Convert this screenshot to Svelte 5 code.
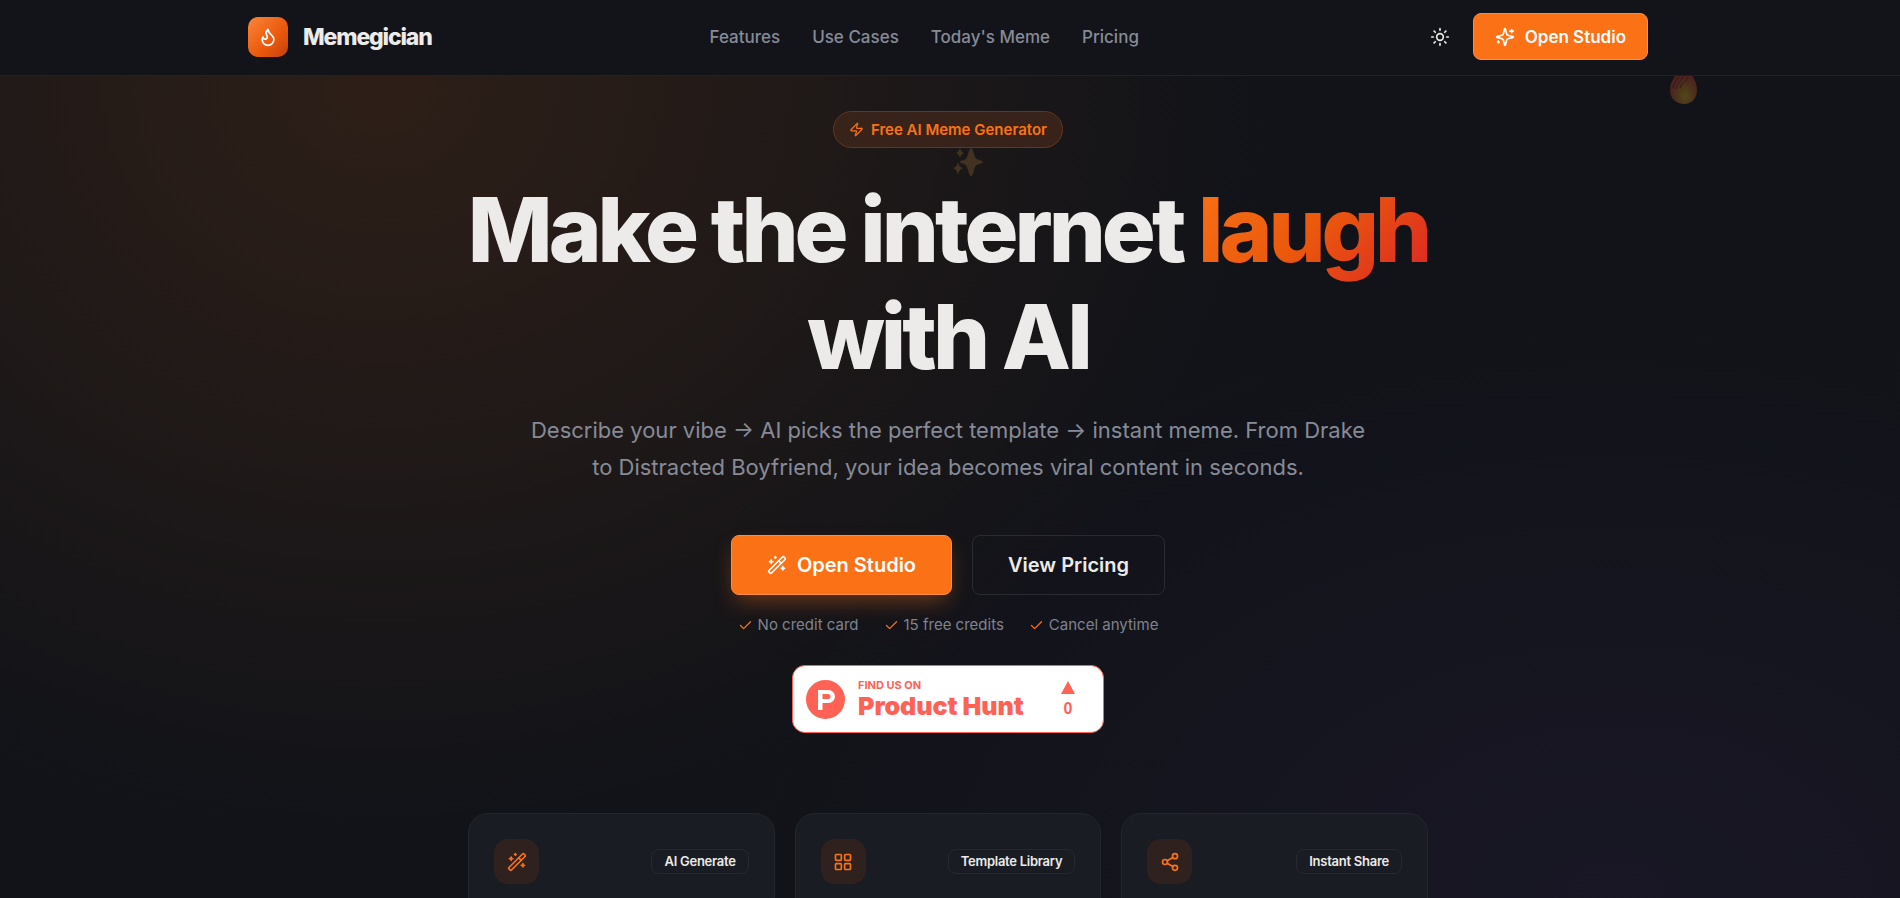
<script>
    const links = ['Features', 'Use Cases', "Today's Meme", 'Pricing']
    const perks = ['No credit card', '15 free credits', 'Cancel anytime']
    const cards = [
        { icon: 'wand', tag: 'AI Generate' },
        { icon: 'grid', tag: 'Template Library' },
        { icon: 'share', tag: 'Instant Share' }
    ]
</script>

{#snippet icon(name, size)}
<svg class="icon" width={size} height={size} viewBox="0 0 24 24" aria-hidden="true">
    {#if name === 'flame'}
        <path d="M8.5 14.5A2.5 2.5 0 0 0 11 12c0-1.38-.5-2-1-3-1.072-2.143-.224-4.054 2-6 .5 2.5 2 4.9 4 6.5 2 1.6 3 3.5 3 5.5a7 7 0 1 1-14 0c0-1.153.433-2.294 1-3a2.5 2.5 0 0 0 2.5 2.5z" />
    {:else if name === 'sun'}
        <circle cx="12" cy="12" r="4" />
        <path d="M12 2v2M12 20v2M4.93 4.93l1.41 1.41M17.66 17.66l1.41 1.41M2 12h2M20 12h2M6.34 17.66l-1.41 1.41M19.07 4.93l-1.41 1.41" />
    {:else if name === 'sparkles'}
        <path d="M9.937 15.5A2 2 0 0 0 8.5 14.063l-6.135-1.582a.5.5 0 0 1 0-.962L8.5 9.936A2 2 0 0 0 9.937 8.5l1.582-6.135a.5.5 0 0 1 .963 0L14.063 8.5A2 2 0 0 0 15.5 9.937l6.135 1.581a.5.5 0 0 1 0 .964L15.5 14.063a2 2 0 0 0-1.437 1.437l-1.582 6.135a.5.5 0 0 1-.963 0z" />
        <path d="M20 3v4M22 5h-4M4 17v2M5 18H3" />
    {:else if name === 'zap'}
        <path d="M4 14a1 1 0 0 1-.78-1.63l9.9-10.2a.5.5 0 0 1 .86.46l-1.92 6.02A1 1 0 0 0 13 10h7a1 1 0 0 1 .78 1.63l-9.9 10.2a.5.5 0 0 1-.86-.46l1.92-6.02A1 1 0 0 0 11 14z" />
    {:else if name === 'wand'}
        <path d="m21.64 3.64-1.28-1.28a1.21 1.21 0 0 0-1.72 0L2.36 18.64a1.21 1.21 0 0 0 0 1.72l1.28 1.28a1.2 1.2 0 0 0 1.72 0L21.64 5.36a1.2 1.2 0 0 0 0-1.72" />
        <path d="m14 7 3 3M5 6v4M19 14v4M10 2v2M7 8H3M21 16h-4M11 3H9" />
    {:else if name === 'check'}
        <path d="M20 6 9 17l-5-5" />
    {:else if name === 'grid'}
        <rect x="3" y="3" width="7" height="7" rx="1" />
        <rect x="14" y="3" width="7" height="7" rx="1" />
        <rect x="14" y="14" width="7" height="7" rx="1" />
        <rect x="3" y="14" width="7" height="7" rx="1" />
    {:else if name === 'share'}
        <circle cx="18" cy="5" r="3" />
        <circle cx="6" cy="12" r="3" />
        <circle cx="18" cy="19" r="3" />
        <path d="m8.59 13.51 6.83 3.98M15.41 6.51l-6.82 3.98" />
    {/if}
</svg>
{/snippet}

<div class="page">
    <header>
        <div class="bar">
            <a class="brand" href="#home">
                <span class="logo">{@render icon('flame', 20)}</span>
                Memegician
            </a>
            <nav>
                {#each links as link}
                <a href="#{link}">{link}</a>
                {/each}
            </nav>
            <div class="actions">
                <button class="theme" aria-label="Toggle theme">{@render icon('sun', 20)}</button>
                <button class="primary small">{@render icon('sparkles', 20)} Open Studio</button>
            </div>
        </div>
    </header>

    <svg class="floating fire" width="28" height="36" viewBox="0 0 28 36" aria-hidden="true">
        <defs>
            <radialGradient id="ember" cx="0.56" cy="0.78" r="0.55">
                <stop offset="0" stop-color="#e0c020" />
                <stop offset="0.45" stop-color="#d98a20" />
                <stop offset="1" stop-color="#d0452c" />
            </radialGradient>
        </defs>
        <path fill="url(#ember)" d="M14 0c5 3 13 11 13 22 0 9-6 14-13 14S0 31 0 22C0 14 5 5 14 0z" />
        <path fill="none" stroke="#7d2230" d="M3 20C4 14 8 11 10 6M6 21c1-6 6-8 8-14M10 20c1-5 6-6 8-11" />
    </svg>

    <main>
        <section class="hero">
            <div class="pill">{@render icon('zap', 15)} Free AI Meme Generator</div>
            <svg class="floating stars" width="30" height="28" viewBox="0 0 30 28" aria-hidden="true">
                <path d="M18 0c1 0 2 2 3 6 1 4 2 5 5 6 3 1 4 1 4 2s-1 1-4 2c-3 1-4 2-5 6-1 4-2 6-3 6s-2-2-3-6c-1-4-2-5-4-6-3-1-4-1-4-2s1-1 4-2c2-1 3-2 4-6 1-4 2-6 3-6z" />
                <path d="M5 14c1 4 2 5 5 6-3 1-4 3-5 7-1-4-2-6-5-7 3-1 4-2 5-6zM7 0c1 3 2 4 4 5-2 1-3 2-4 5-1-3-2-4-4-5 2-1 3-2 4-5z" />
            </svg>
            <h1>Make the internet <span>laugh</span> with AI</h1>
            <p class="lead">Describe your vibe → AI picks the perfect template → instant meme. From Drake to Distracted Boyfriend, your idea becomes viral content in seconds.</p>
            <div class="buttons">
                <button class="primary large">{@render icon('wand', 20)} Open Studio</button>
                <button class="outline large">View Pricing</button>
            </div>
            <ul class="perks">
                {#each perks as perk}
                <li>{@render icon('check', 15)} {perk}</li>
                {/each}
            </ul>
            <a class="hunt" href="#producthunt">
                <svg width="39" height="39" viewBox="0 0 39 39" aria-hidden="true">
                    <circle cx="19.5" cy="19.5" r="19.5" fill="#ff6154" />
                    <path fill="#fff" fill-rule="evenodd" d="M12 10h10.500a6.500 6.500 0 0 1 0 13H16.500v7H12zM16.500 14v5H22a2.500 2.500 0 0 0 0-5z" />
                </svg>
                <span class="words">
                    <small>FIND US ON</small>
                    <strong>Product Hunt</strong>
                </span>
                <span class="votes">
                    <svg width="14" height="13" viewBox="0 0 14 13" aria-hidden="true"><path fill="#ff6154" d="M7 0l7 13H0z" /></svg>
                    0
                </span>
            </a>
        </section>

        <section class="cards">
            {#each cards as card}
            <article class="card">
                <span class="tile">{@render icon(card.icon, 20)}</span>
                <span class="tag">{card.tag}</span>
            </article>
            {/each}
        </section>
    </main>
</div>

<style>
    :global(body) {
        margin: 0;
        background: #111318;
    }

    .page {
        position: relative;
        height: 100vh;
        overflow: hidden;
        box-sizing: border-box;
        padding-right: 4px;
        font-family: Inter, "Liberation Sans", sans-serif;
        color: #ecebe9;
        background:
            radial-gradient(ellipse 900px 750px at 20% 10%, rgba(249, 115, 22, 0.12), transparent),
            radial-gradient(ellipse 900px 600px at 85% 100%, rgba(145, 80, 243, 0.06), transparent),
            #111318;
    }

    .icon {
        flex: none;
        fill: none;
        stroke: currentColor;
        stroke-width: 2;
        stroke-linecap: round;
        stroke-linejoin: round;
    }

    a {
        color: inherit;
        text-decoration: none;
    }

    button {
        display: flex;
        align-items: center;
        justify-content: center;
        gap: 10px;
        box-sizing: border-box;
        font-family: inherit;
        font-weight: 600;
        color: inherit;
        cursor: pointer;
    }

    header {
        position: relative;
        z-index: 2;
        margin-right: -4px;
        padding: 13px 4px 15px 0;
        background: #121419;
        border-bottom: 1px solid #1f2228;
    }

    .bar {
        display: flex;
        align-items: center;
        justify-content: space-between;
        max-width: 1400px;
        margin: 0 auto;
    }

    .brand {
        display: flex;
        align-items: center;
        gap: 15px;
        font-size: 23px;
        font-weight: 800;
        letter-spacing: -0.05em;
    }

    .logo {
        display: flex;
        align-items: center;
        justify-content: center;
        width: 40px;
        height: 40px;
        border-radius: 10px;
        color: #fff;
        background: linear-gradient(135deg, #fb8538, #ea580c 60%, #c2410c);
    }

    nav {
        display: flex;
        gap: 32px;
        font-size: 17px;
        font-weight: 500;
        color: #868b97;
    }

    .actions {
        display: flex;
        align-items: center;
        gap: 10px;
    }

    .theme {
        width: 46px;
        height: 46px;
        padding: 0;
        border: 0;
        background: none;
    }

    .primary {
        color: #fff;
        background: #fb7116;
        border: 1px solid #fc8d45;
        border-radius: 8px;
    }

    .small {
        height: 47px;
        padding: 0 21px;
        font-size: 17px;
    }

    .floating {
        position: absolute;
        z-index: 1;
        opacity: 0.3;
    }

    .fire {
        top: 68px;
        right: 202px;
    }

    .stars {
        top: 37px;
        left: 50%;
        margin-left: 5px;
        fill: #a07038;
    }

    main {
        max-width: 960px;
        margin: 0 auto;
        padding-top: 35px;
    }

    .hero {
        position: relative;
        display: flex;
        flex-direction: column;
        align-items: center;
        text-align: center;
    }

    .pill {
        display: flex;
        align-items: center;
        gap: 7px;
        box-sizing: border-box;
        height: 37px;
        padding: 0 15px;
        font-size: 15px;
        font-weight: 600;
        color: #f97316;
        background: #372319;
        border: 1px solid #63371c;
        border-radius: 19px;
    }

    h1 {
        align-self: stretch;
        margin: 28px -20px 0;
        font-size: 90px;
        line-height: 107px;
        font-weight: 800;
        letter-spacing: -4px;
    }

    h1 span {
        color: transparent;
        background: linear-gradient(135deg, #f97316, #ea580c 50%, #dc2626);
        -webkit-background-clip: text;
        background-clip: text;
    }

    .lead {
        max-width: 850px;
        margin: 22px 0 0;
        font-size: 22px;
        line-height: 37px;
        color: #868b97;
    }

    .buttons {
        display: flex;
        gap: 20px;
        margin-top: 49px;
    }

    .large {
        height: 60px;
        padding: 0 35px;
        font-size: 20px;
    }

    .primary.large {
        box-shadow: 0 10px 22px -5px rgba(249, 115, 22, 0.4);
    }

    .outline {
        background: none;
        border: 1px solid #2a2b31;
        border-radius: 8px;
    }

    .perks {
        display: flex;
        gap: 25px;
        margin: 20px 0 0;
        padding: 0;
        list-style: none;
        font-size: 15px;
        line-height: 20px;
        color: #7f838e;
    }

    .perks li {
        display: flex;
        align-items: center;
        gap: 5px;
    }

    .perks :global(.icon) {
        color: #f97316;
    }

    .hunt {
        display: flex;
        align-items: center;
        box-sizing: border-box;
        width: 312px;
        height: 68px;
        margin-top: 30px;
        padding: 0 28px 0 13px;
        font-weight: 700;
        color: #ff6154;
        background: #fff;
        border: 1px solid #ff6154;
        border-radius: 13px;
    }

    .words {
        display: flex;
        flex-direction: column;
        margin-left: 13px;
        text-align: left;
    }

    .words small {
        font-size: 11px;
        line-height: 14px;
    }

    .words strong {
        font-size: 25px;
        line-height: 28px;
    }

    .votes {
        display: flex;
        flex-direction: column;
        align-items: center;
        gap: 6px;
        margin-left: auto;
        font-family: "Liberation Sans", Arial, sans-serif;
        font-size: 16px;
        line-height: 18px;
    }

    .cards {
        display: grid;
        grid-template-columns: repeat(3, 1fr);
        gap: 20px;
        margin-top: 80px;
    }

    .card {
        display: flex;
        align-items: flex-start;
        justify-content: space-between;
        min-height: 200px;
        padding: 25px;
        background: #191c22;
        border: 1px solid #23262c;
        border-radius: 20px;
    }

    .tile {
        display: flex;
        align-items: center;
        justify-content: center;
        width: 45px;
        height: 45px;
        border-radius: 14px;
        color: #f97316;
        background: #2f221e;
    }

    .tag {
        margin-top: 10px;
        padding: 0 12px;
        font-size: 13px;
        line-height: 23px;
        font-weight: 600;
        letter-spacing: -0.02em;
        border: 1px solid #26292f;
        border-radius: 8px;
    }
</style>
